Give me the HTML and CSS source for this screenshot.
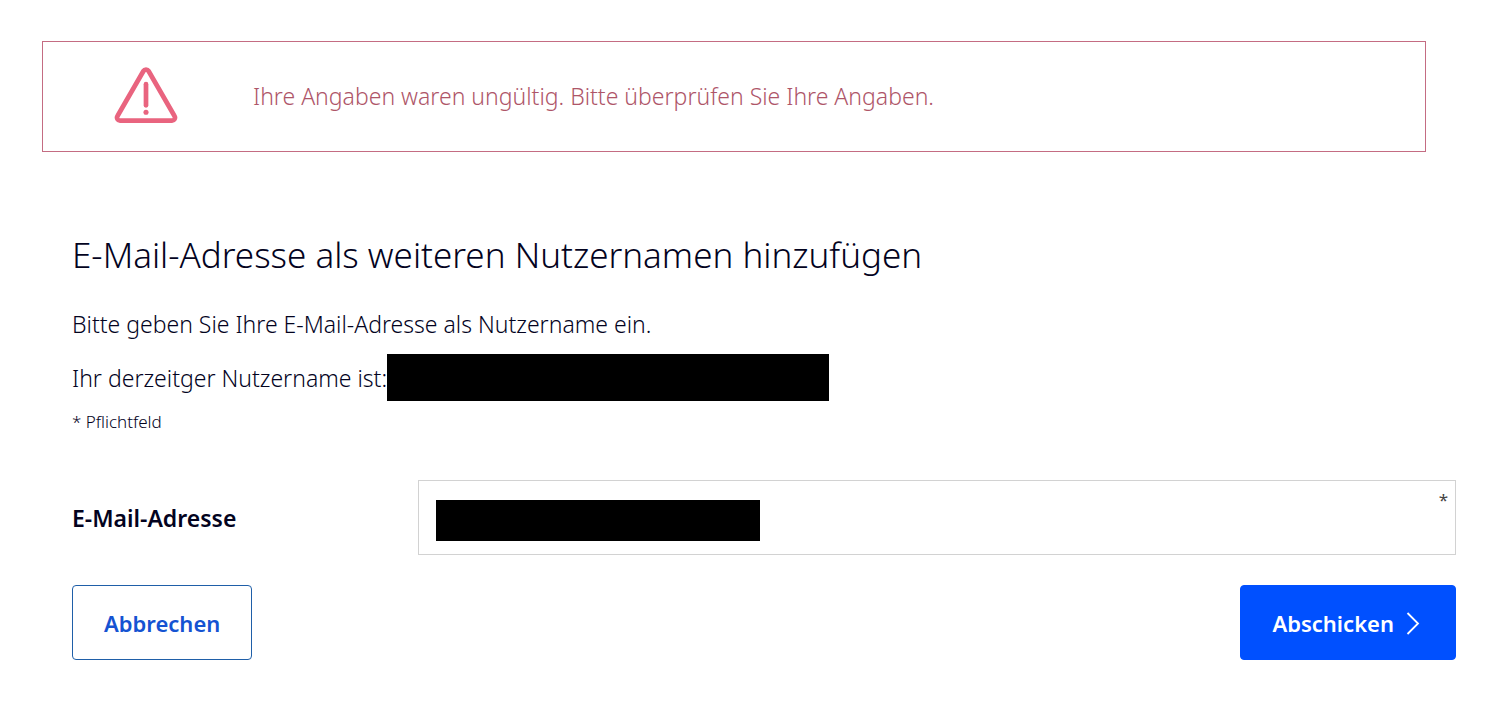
FILE: index.html
```html
<!DOCTYPE html>
<html lang="de">
<head>
<meta charset="utf-8">
<meta name="viewport" content="width=device-width, initial-scale=1">
<title>E-Mail-Adresse als weiteren Nutzernamen hinzufügen</title>
<link rel="stylesheet" href="styles.css">
</head>
<body>
<main class="page">
  <div class="alert" role="alert">
    <svg class="alert-icon" viewBox="0 0 64 58" aria-hidden="true">
      <path d="M29.4 4.1a3 3 0 0 1 5.2 0L61 49.9a3 3 0 0 1-2.6 4.6H5.6a3 3 0 0 1-2.6-4.6Z" fill="none" stroke="currentColor" stroke-width="4.8" stroke-linejoin="round"/>
      <path d="M32 17.5v21.5" fill="none" stroke="currentColor" stroke-width="4.8" stroke-linecap="round"/>
      <circle cx="32" cy="46" r="2.6" fill="currentColor"/>
    </svg>
    <p class="alert-text">Ihre Angaben waren ungültig. Bitte überprüfen Sie Ihre Angaben.</p>
  </div>
  <form class="form">
    <h1 class="title">E-Mail-Adresse als weiteren Nutzernamen hinzufügen</h1>
    <p class="text">Bitte geben Sie Ihre E-Mail-Adresse als Nutzername ein.</p>
    <p class="text username">Ihr derzeitger Nutzername ist:<span class="redacted"></span></p>
    <p class="note">* Pflichtfeld</p>
    <div class="row">
      <label class="label" for="email">E-Mail-Adresse</label>
      <div class="field">
        <input class="input" id="email" type="email" required>
        <span class="field-redacted"></span>
        <span class="required">*</span>
      </div>
    </div>
    <div class="actions">
      <button class="button secondary" type="button">Abbrechen</button>
      <button class="button primary" type="submit">Abschicken
        <svg class="chevron" viewBox="0 0 14 24" aria-hidden="true"><path d="M1.500 2l10.500 10.500L1.500 23" fill="none" stroke="currentColor" stroke-width="1.8"/></svg>
      </button>
    </div>
  </form>
</main>
</body>
</html>
```
FILE: styles.css
```css
* {
  box-sizing: border-box;
}

body {
  margin: 0;
  background: #fff;
  color: #03031e;
  font-family: "Noto Sans", "Open Sans", sans-serif;
  font-size: 23px;
  font-weight: 300;
  line-height: 32px;
}

.page {
  padding: 41px 51px 41px 42px;
}

.alert {
  display: flex;
  align-items: center;
  gap: 75px;
  margin-right: 30px;
  padding: 25px 71px 27px;
  border: 1px solid #c46c82;
  color: #e9647f;
}

.alert-icon {
  flex: none;
  width: 64px;
  height: 57px;
}

.alert-text {
  margin: 0;
  color: #ae5568;
}

.form {
  margin: 79px 0 0 30px;
}

.title {
  margin: 0 0 29px;
  font-size: 35px;
  font-weight: 300;
  line-height: 48px;
}

.text {
  margin: 0 0 14px;
}

.username {
  display: flex;
  align-items: center;
  margin: 0;
}

.redacted {
  width: 442px;
  height: 47px;
  background: #000;
}

.note {
  margin: 9px 0 46px;
  font-size: 17px;
  line-height: 24px;
}

.row {
  display: grid;
  grid-template-columns: 1fr 3fr;
  align-items: center;
}

.label {
  font-weight: 600;
}

.field {
  position: relative;
}

.input {
  display: block;
  width: 100%;
  height: 75px;
  padding: 0 17px;
  border: 1px solid #d2d2d2;
  background: #fff;
  color: inherit;
  font: inherit;
}

.field-redacted {
  position: absolute;
  top: 20px;
  left: 18px;
  width: 324px;
  height: 41px;
  background: #000;
}

.required {
  position: absolute;
  top: 8px;
  right: 8px;
  color: #444;
  font-size: 17px;
  font-weight: 400;
  line-height: 24px;
}

.actions {
  display: flex;
  justify-content: space-between;
  margin-top: 30px;
}

.button {
  display: flex;
  align-items: center;
  gap: 12px;
  height: 75px;
  padding: 0 31px;
  border: 1px solid #1f5fa8;
  border-radius: 4px;
  font: inherit;
  font-size: 22px;
  font-weight: 600;
}

.secondary {
  background: #fff;
  color: #1553d2;
}

.primary {
  padding-right: 35px;
  border-color: #0050ff;
  background: #0050ff;
  color: #fff;
}

.chevron {
  width: 14px;
  height: 24px;
}
```
